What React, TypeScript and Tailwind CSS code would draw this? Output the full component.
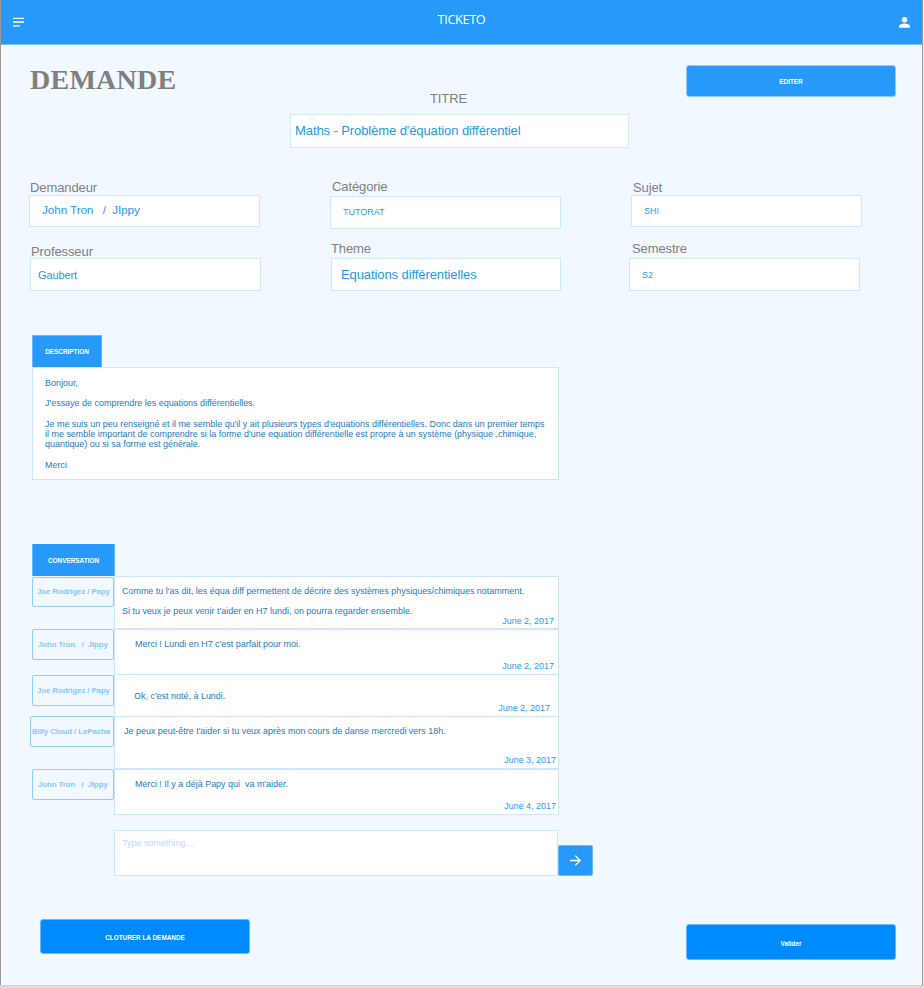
import type { ReactNode } from "react";

type FieldProps = {
  label: string;
  value: string;
  wrap: string;
  labelClass: string;
  box: string;
  text: string;
};

function Field({ label, value, wrap, labelClass, box, text }: FieldProps) {
  return (
    <div className={`flex flex-col ${wrap}`}>
      <label className={`block whitespace-pre text-[13px] leading-[14px] tracking-[-0.1px] text-[#7f7f7f] ${labelClass}`}>{label}</label>
      <div className={`border border-[#cfe8fd] bg-white ${box}`}>
        <span className={`block whitespace-pre leading-[14px] ${text}`}>{value}</span>
      </div>
    </div>
  );
}

type MessageProps = {
  author: string;
  date: string;
  row: string;
  tag: string;
  bubble: string;
  dateClass: string;
  children: ReactNode;
};

function Message({ author, date, row, tag, bubble, dateClass, children }: MessageProps) {
  return (
    <div className={`flex items-start ${row}`}>
      <div className={`shrink-0 whitespace-pre rounded-[2px] border border-[#8fcbfd] text-[7.9px] font-bold leading-[10px] tracking-[-0.11px] text-[#88c7fc] ${tag}`}>
        {author}
      </div>
      <div className={`flex h-full w-[445px] shrink-0 flex-col border-x border-t border-[#cbe6fd] bg-white text-[8.96px] leading-[10px] text-[#1e79c4] ${bubble}`}>
        {children}
        <time className={`mt-auto self-end text-[#2699fb] ${dateClass}`}>{date}</time>
      </div>
    </div>
  );
}

export default function App() {
  return (
    <div className="flex h-[988px] w-[924px] flex-col overflow-hidden bg-[#e9e9e9] font-['Liberation_Sans',Arial,sans-serif]">
      <div className="flex h-[985px] w-[923px] shrink-0 flex-col border-x border-[#999999] bg-[#f1f8ff]">
        <header className="flex h-[45px] shrink-0 items-start justify-between border-b border-[#77bffc] bg-[#2699fb] text-white">
          <svg className="ml-[12px] mt-[17px] h-[10px] w-[11px]" viewBox="0 0 11 10" fill="none" stroke="currentColor" strokeWidth="1.3">
            <path d="M0 1.3h11M0 5h11M0 8.8h7" />
          </svg>
          <h1 className="mt-[11px] font-['Open_Sans',sans-serif] text-[12.8px] leading-[16px] tracking-[-0.4px]">TICKETO</h1>
          <svg className="mr-[12px] mt-[17px] h-[11px] w-[11px]" viewBox="0 0 11 11" fill="currentColor">
            <circle cx="5.5" cy="2.7" r="2.7" />
            <path d="M0 10.7V9.3C0 7.5 3.6 6.6 5.5 6.6S11 7.5 11 9.3v1.4z" />
          </svg>
        </header>

        <section className="flex h-[103px] shrink-0 items-start">
          <h2 className="ml-[29px] mt-[21px] w-[260px] font-['Liberation_Serif',serif] text-[28px] font-bold leading-[28px] tracking-[0.25px] text-[#7f7f7f]">DEMANDE</h2>
          <div className="flex w-[339px] flex-col items-start">
            <label className="ml-[140px] mt-[47px] h-[22px] text-[13px] leading-[14px] tracking-[-0.1px] text-[#7f7f7f]">TITRE</label>
            <div className="h-[34px] w-[339px] border border-[#d3eafd] bg-white pl-[4px] pt-[9px] text-[13px] leading-[14px] tracking-[-0.09px] text-[#1b9ae6]">
              Maths - Problème d'équation différentiel
            </div>
          </div>
          <button className="ml-[57px] mt-[20px] h-[32px] w-[210px] rounded-[3px] border border-[#8fcbfd] bg-[#2699fb] pt-[2px] text-[6.4px] font-bold leading-[8px] text-white">EDITER</button>
        </section>

        <section className="flex h-[187px] shrink-0 items-start">
          <div className="flex w-[300px] flex-col">
            <Field label="Demandeur" value={"John Tron   /  JIppy"} wrap="ml-[28px] mt-[33px]" labelClass="h-[14px] pl-px"
              box="h-[32px] w-[231px]" text="pl-[12px] pt-[7px] text-[11.8px] tracking-[-0.13px] text-[#2699fb]" />
            <Field label="Professeur" value="Gaubert" wrap="ml-[29px] mt-[18px]" labelClass="h-[13px] pl-px"
              box="h-[33px] w-[231px]" text="pl-[7px] pt-[9px] text-[11px] tracking-[-0.1px] text-[#1b9ae6]" />
          </div>
          <div className="flex w-[300px] flex-col">
            <Field label="Catégorie" value="TUTORAT" wrap="ml-[29px] mt-[32px]" labelClass="h-[16px] pl-[2px]"
              box="h-[33px] w-[231px]" text="pl-[12px] pt-[8px] text-[8.96px] text-[#2699fb]" />
            <Field label="Theme" value="Equations différentielles" wrap="ml-[30px] mt-[13px]" labelClass="h-[16px]"
              box="h-[33px] w-[230px]" text="pl-[9px] pt-[9px] text-[13px] tracking-[-0.09px] text-[#1b9ae6]" />
          </div>
          <div className="flex w-[300px] flex-col">
            <Field label="Sujet" value="SHI" wrap="ml-[30px] mt-[33px]" labelClass="h-[14px] pl-[2px]"
              box="h-[32px] w-[231px]" text="pl-[12px] pt-[8px] text-[8.96px] text-[#2699fb]" />
            <Field label="Semestre" value="S2" wrap="ml-[28px] mt-[15px]" labelClass="h-[16px] pl-[3px]"
              box="h-[33px] w-[231px]" text="pl-[12px] pt-[9px] text-[8.96px] text-[#2699fb]" />
          </div>
        </section>

        <section className="ml-[31px] flex h-[209px] shrink-0 flex-col items-start">
          <div className="flex h-[32px] w-[70px] items-center justify-center border border-b-0 border-[#67b8fc] bg-[#2699fb] text-[6.4px] font-bold leading-[8px] text-white">DESCRIPTION</div>
          <div className="h-[113px] w-[527px] border border-[#cbe6fd] bg-white pl-[12px] pt-[10px] text-[8.96px] leading-[10.3px] text-[#1e79c4]">
            <p>Bonjour,</p>
            <p className="mt-[10px]">J'essaye de comprendre les equations différentielles.</p>
            <p className="mt-[10px] whitespace-pre">{"Je me suis un peu renseigné et il me semble qu'il y ait plusieurs types d'equations différentielles. Donc dans un premier temps\nil me semble important de comprendre si la forme d'une equation différentielle est propre à un système (physique ,chimique,\nquantique) ou si sa forme est générale."}</p>
            <p className="mt-[11px]">Merci</p>
          </div>
        </section>

        <section className="ml-[29px] flex h-[375px] shrink-0 flex-col items-start">
          <div className="ml-[2px] flex h-[32px] w-[83px] shrink-0 items-center justify-center border-x border-[#67b8fc] bg-[#2699fb] pt-[2px] text-[6.4px] font-bold leading-[8px] text-white">CONVERSATION</div>
          <Message author="Joe Rodrigez / Papy" date="June 2, 2017" row="h-[53px]" tag="ml-[2px] mt-px h-[30px] w-[82px] pl-[4px] pt-[9px]"
            bubble="border-b pt-[9px]" dateClass="mr-[4px] mb-[2px]">
            <p className="pl-[7px]">Comme tu l'as dit, les équa diff permettent de décrire des systèmes physiques/chimiques notamment.</p>
            <p className="mt-[10px] pl-[7px]">Si tu veux je peux venir t'aider en H7 lundi, on pourra regarder ensemble.</p>
          </Message>
          <Message author={"John Tron   /  JIppy"} date="June 2, 2017" row="h-[45px]" tag="ml-[2px] h-[31px] w-[82px] pl-[5px] pt-[10px]"
            bubble="pt-[9px]" dateClass="mr-[4px] mb-[3px]">
            <p className="pl-[20px]">Merci ! Lundi en H7 c'est parfait pour moi.</p>
          </Message>
          <Message author="Joe Rodrigez / Papy" date="June 2, 2017" row="h-[42px]" tag="ml-[2px] mt-px h-[31px] w-[82px] pl-[4px] pt-[10px]"
            bubble="pt-[16px]" dateClass="mr-[8px] mb-[3px]">
            <p className="pl-[19px]">Ok, c'est noté, à Lundi.</p>
          </Message>
          <Message author="Billy Cloud / LePacha" date="June 3, 2017" row="h-[53px]" tag="h-[31px] w-[84px] pl-[1px] pt-[10px]"
            bubble="border-b pt-[9px]" dateClass="mr-[2px] mb-[3px]">
            <p className="pl-[9px]">Je peux peut-être t'aider si tu veux après mon cours de danse mercredi vers 18h.</p>
          </Message>
          <Message author={"John Tron   /  JIppy"} date="June 4, 2017" row="h-[46px]" tag="ml-[2px] h-[31px] w-[82px] pl-[5px] pt-[10px]"
            bubble="border-b pt-[9px]" dateClass="mr-[2px] mb-[3px]">
            <p className="whitespace-pre pl-[20px]">{"Merci ! Il y a déjà Papy qui  va m'aider."}</p>
          </Message>
          <div className="ml-[84px] mt-[15px] flex items-end">
            <div className="h-[46px] w-[444px] border border-[#cbe6fd] bg-white pl-[7px] pt-[7px] text-[8.96px] leading-[10px] text-[#b5dbfb]">Type something…</div>
            <button className="flex h-[31px] w-[35px] items-center justify-center rounded-[2px] border border-[#67b8fc] bg-[#2699fb] text-white" aria-label="Envoyer">
              <svg className="h-[11px] w-[11px]" viewBox="0 0 11 11" fill="none" stroke="currentColor" strokeWidth="1.3">
                <path d="M0 5.5h10M5.3.6l4.9 4.9-4.9 4.9" />
              </svg>
            </button>
          </div>
        </section>

        <section className="flex shrink-0 items-start">
          <button className="ml-[39px] h-[35px] w-[210px] rounded-[3px] border border-[#67b8fc] bg-[#008aff] pt-[3px] text-[6.4px] font-bold leading-[8px] text-white">CLOTURER LA DEMANDE</button>
          <button className="ml-[436px] mt-[5px] h-[36px] w-[210px] rounded-[3px] border border-[#67b8fc] bg-[#008aff] pt-[3px] text-[6.4px] font-bold leading-[8px] text-white">Valider</button>
        </section>
      </div>
      <div className="h-[3px] border-t border-[#d0d0d0] bg-[#dcdcdc]" />
    </div>
  );
}
